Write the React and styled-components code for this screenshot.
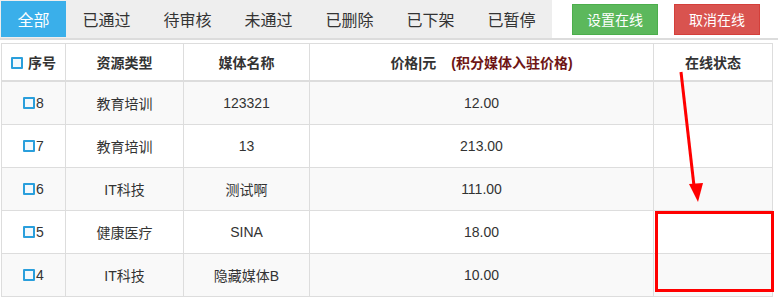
import React from "react";
import styled, { createGlobalStyle } from "styled-components";

const tabs = ["全部", "已通过", "待审核", "未通过", "已删除", "已下架", "已暂停"];

const rows = [
  { id: 8, type: "教育培训", name: "123321", price: "12.00" },
  { id: 7, type: "教育培训", name: "13", price: "213.00" },
  { id: 6, type: "IT科技", name: "测试啊", price: "111.00" },
  { id: 5, type: "健康医疗", name: "SINA", price: "18.00" },
  { id: 4, type: "IT科技", name: "隐藏媒体B", price: "10.00" },
];

const GlobalStyle = createGlobalStyle`
  html, body {
    margin: 0;
    padding: 0;
    background: #fff;
  }
  body {
    font-family: "Liberation Sans", "Noto Sans CJK SC", sans-serif;
    color: #333;
  }
`;

const Page = styled.div`
  position: relative;
  width: 778px;
  height: 298px;
  overflow: hidden;
`;

const Toolbar = styled.div`
  display: flex;
  align-items: center;
  height: 38px;
  border-bottom: 2px solid #dcdcdc;
`;

const TabGroup = styled.div`
  display: flex;
  align-self: stretch;
  background: #eeeeee;
  padding: 1px 0 1px 1px;
`;

const Tab = styled.div`
  display: flex;
  align-items: center;
  justify-content: center;
  width: ${(p) => (p.$wide ? 81 : 65)}px;
  font-size: 16px;
  color: ${(p) => (p.$active ? "#fff" : "#333")};
  background: ${(p) => (p.$active ? "#3aafea" : "transparent")};
`;

const Button = styled.button`
  width: 86px;
  height: 31px;
  margin-left: ${(p) => p.$gap}px;
  border: 1px solid ${(p) => (p.$danger ? "#d43f3a" : "#4cae4c")};
  background: ${(p) => (p.$danger ? "#d9534f" : "#5cb85c")};
  color: #fff;
  font-family: inherit;
  font-size: 14px;
  padding: 0;
  cursor: pointer;
`;

const Table = styled.table`
  margin: 3px 0 0 1px;
  width: 772px;
  border-collapse: collapse;
  table-layout: fixed;
  font-size: 14px;
`;

const Th = styled.th`
  height: 36px;
  padding: 0;
  border: 1px solid #dddddd;
  border-bottom-width: 2px;
  font-weight: bold;
  color: #333;
  text-align: center;
`;

const Note = styled.span`
  margin-left: 15px;
  color: #6e1515;
`;

const Row = styled.tr`
  background: ${(p) => (p.$striped ? "#f9f9f9" : "#fff")};
`;

const Td = styled.td`
  height: 42px;
  padding: 0;
  border: 1px solid #dddddd;
  text-align: center;
  color: #333;
`;

const Check = styled.span`
  display: inline-block;
  box-sizing: border-box;
  width: 12px;
  height: 12px;
  margin-right: ${(p) => p.$space}px;
  border: 2px solid #2a9fdc;
  border-radius: 1px;
  background: #f4f9fd;
  vertical-align: -1px;
`;

const Highlight = styled.div`
  position: absolute;
  left: 655px;
  top: 211px;
  width: 119px;
  height: 81px;
  box-sizing: border-box;
  border: 3px solid #ff0000;
  pointer-events: none;
`;

const ArrowLayer = styled.svg`
  position: absolute;
  left: 0;
  top: 0;
  pointer-events: none;
`;

export default function App() {
  return (
    <Page>
      <GlobalStyle />
      <Toolbar>
        <TabGroup>
          {tabs.map((t, i) => (
            <Tab key={t} $active={i === 0} $wide={i > 0}>
              {t}
            </Tab>
          ))}
        </TabGroup>
        <Button $gap={20}>设置在线</Button>
        <Button $gap={16} $danger>
          取消在线
        </Button>
      </Toolbar>

      <Table>
        <colgroup>
          <col style={{ width: 64 }} />
          <col style={{ width: 118 }} />
          <col style={{ width: 126 }} />
          <col style={{ width: 344 }} />
          <col />
        </colgroup>
        <thead>
          <tr>
            <Th>
              <Check $space={5} />
              序号
            </Th>
            <Th>资源类型</Th>
            <Th>媒体名称</Th>
            <Th>
              价格|元<Note>(积分媒体入驻价格)</Note>
            </Th>
            <Th>在线状态</Th>
          </tr>
        </thead>
        <tbody>
          {rows.map((r, i) => (
            <Row key={r.id} $striped={i % 2 === 0}>
              <Td>
                <Check $space={1} />
                {r.id}
              </Td>
              <Td>{r.type}</Td>
              <Td>{r.name}</Td>
              <Td>{r.price}</Td>
              <Td />
            </Row>
          ))}
        </tbody>
      </Table>

      <Highlight />
      <ArrowLayer width="778" height="298">
        <line x1="681" y1="72" x2="694" y2="186" stroke="#ff0000" strokeWidth="3" />
        <polygon points="689,184 703,183 698,202" fill="#ff0000" />
      </ArrowLayer>
    </Page>
  );
}
